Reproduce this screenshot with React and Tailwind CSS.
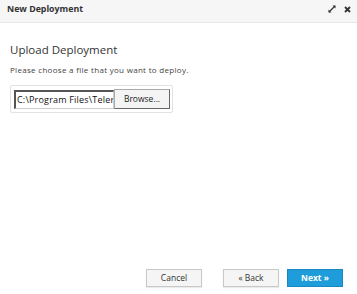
export default function App() {
  return (
    <div className="flex h-[294px] w-[357px] flex-col bg-white text-[#333]" style={{ fontFamily: '"Open Sans", "Liberation Sans", sans-serif' }}>
      <div className="flex h-[23px] items-start justify-between border-b border-[#e8e8e8] bg-[#f6f6f6] pl-[7px] pr-[6px] pt-[3px]">
        <span className="text-[8.8px] font-bold leading-[12px] text-[#333]">New Deployment</span>
        <div className="flex items-center gap-[8px] pt-[2px]">
          <svg width="8" height="8" viewBox="0 0 8 8" className="text-[#333]">
            <path d="M1 7 L7 1" stroke="currentColor" strokeWidth="1.2" />
            <path d="M0.5 4.5 V7.5 H3.5 Z" fill="currentColor" />
            <path d="M4.5 0.5 H7.5 V3.5 Z" fill="currentColor" />
          </svg>
          <svg width="7" height="7" viewBox="0 0 7 7" className="text-[#333]">
            <path d="M1 1 L6 6 M6 1 L1 6" stroke="currentColor" strokeWidth="1.8" />
          </svg>
        </div>
      </div>
      <div className="flex flex-1 flex-col px-[10px] pt-[19px]">
        <h1 className="text-[11.5px] leading-[16px] text-[#333]">Upload Deployment</h1>
        <p className="mt-[6px] text-[8px] leading-[12px] tracking-[0.3px] text-[#444]">Please choose a file that you want to deploy.</p>
        <div className="mt-[9px] flex w-[163px] items-center rounded-[2px] border border-[#e2e2e2] py-[3px] pl-[3px] pr-[2px]">
          <input
            readOnly
            value="C:\Program Files\Telerik"
            className="h-[19px] w-[100px] border-l-[2px] border-t-[2px] border-[#555] border-b border-r border-b-[#ccc] border-r-[#ccc] bg-white pl-[1px] text-[9px] tracking-[0.2px] text-[#111] outline-none"
            style={{ fontFamily: '"Open Sans", "Liberation Sans", sans-serif' }}
          />
          <div className="flex h-[20px] w-[57px] items-center justify-center border border-[#aaa] border-r-[#666] border-b-[#666] bg-[#f4f4f4] text-[8.5px] text-[#222]">Browse...</div>
        </div>
      </div>
      <div className="flex items-center justify-end pb-[7px] pr-[14px]">
        <button className="h-[18px] w-[56px] border border-[#c8c8c8] bg-[#f5f5f5] text-[8.5px] text-[#333] shadow-[0_1px_1px_rgba(0,0,0,0.08)]">Cancel</button>
        <button className="ml-[21px] h-[18px] w-[56px] border border-[#c8c8c8] bg-[#f5f5f5] text-[8.5px] text-[#333] shadow-[0_1px_1px_rgba(0,0,0,0.08)]">« Back</button>
        <button className="ml-[8px] h-[18px] w-[56px] border border-[#1b86bf] bg-[#1f9ddb] text-[8.5px] font-bold text-white">Next »</button>
      </div>
    </div>
  );
}
